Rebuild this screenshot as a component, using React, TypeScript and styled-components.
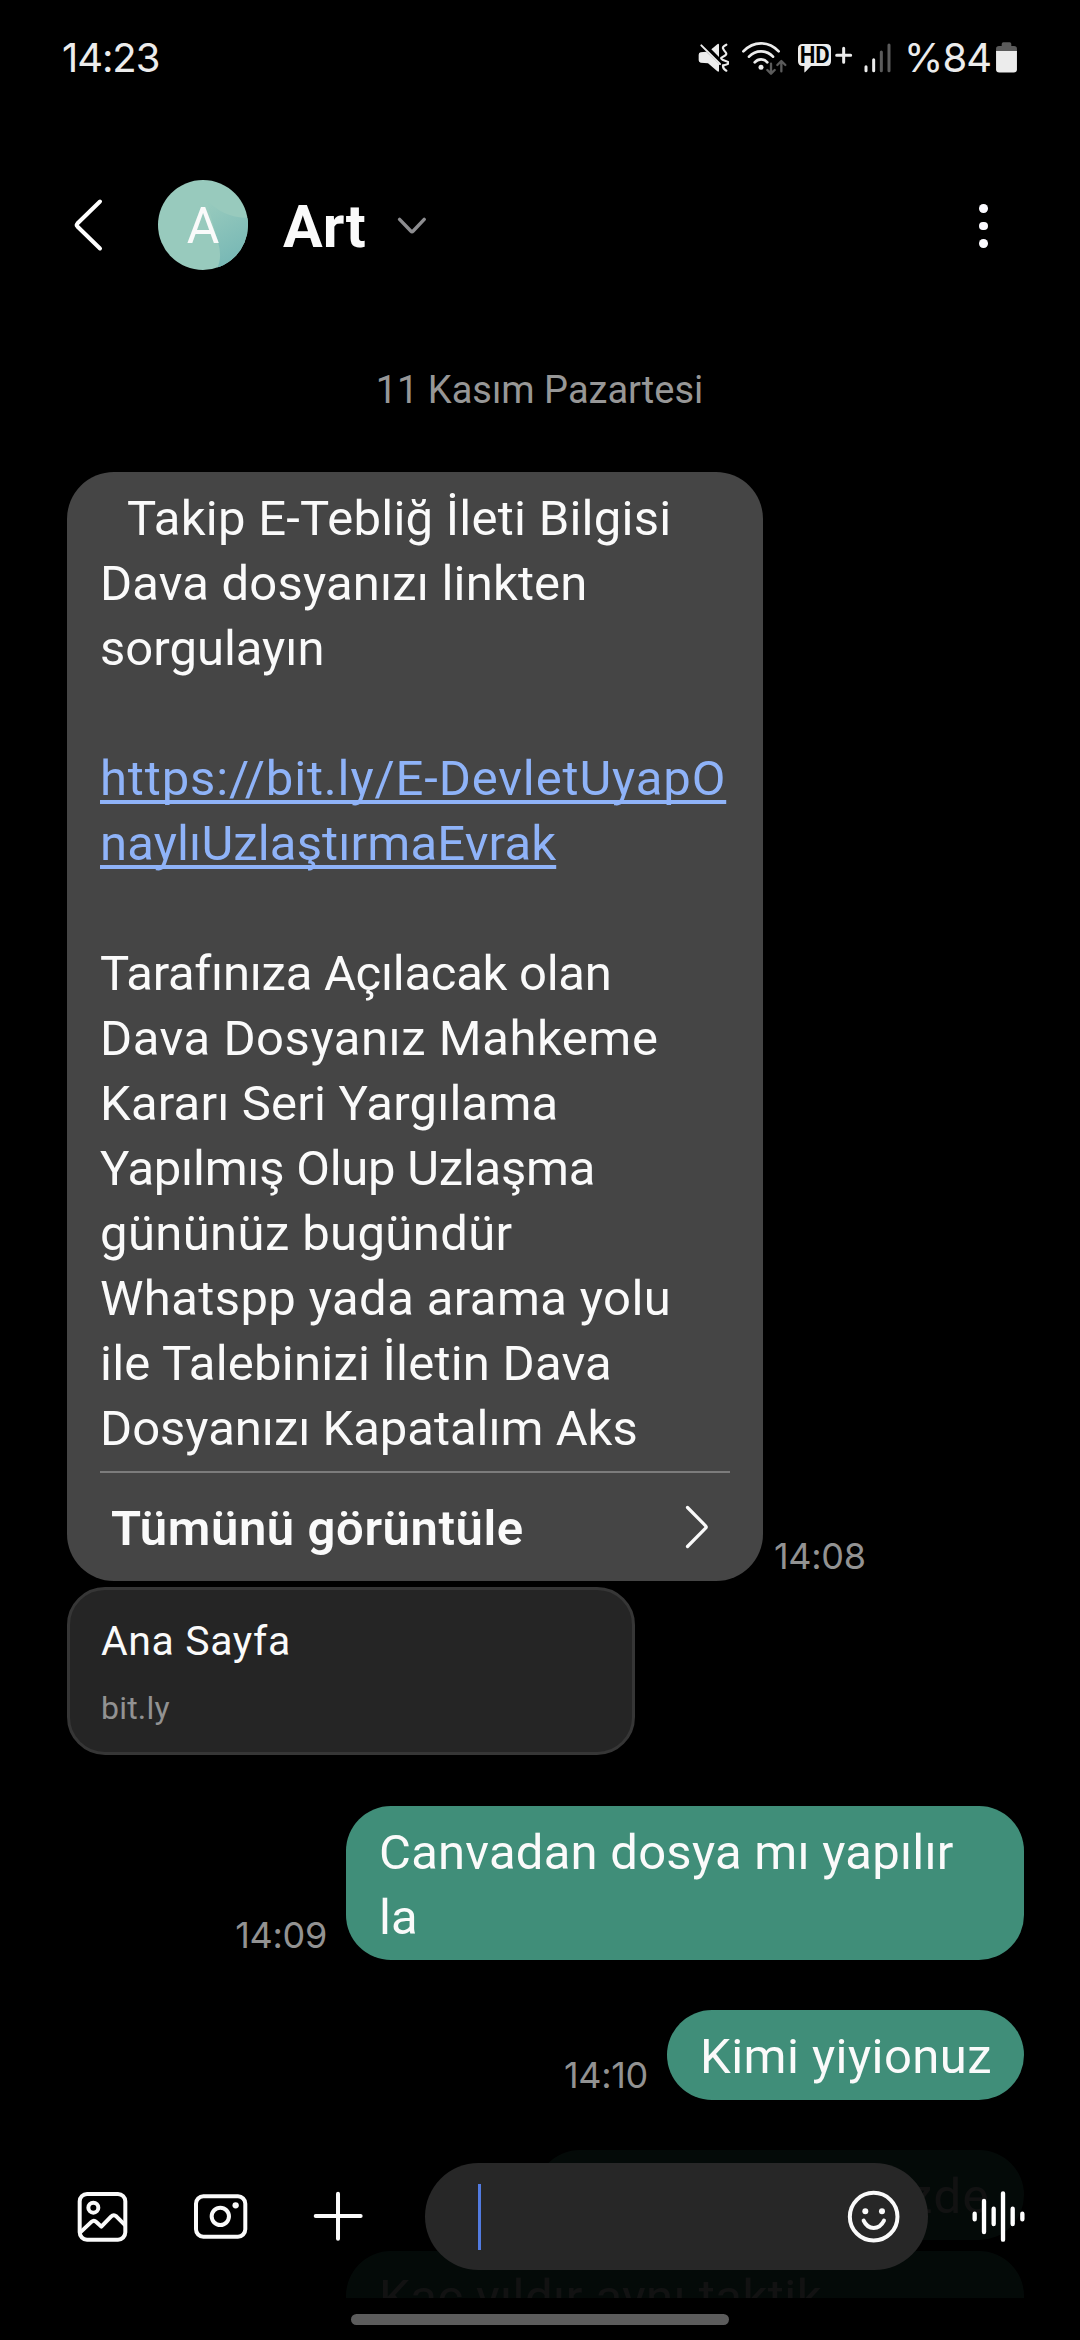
import React from 'react';
import styled, { createGlobalStyle } from 'styled-components';

const GlobalStyle = createGlobalStyle`
  *, *::before, *::after { box-sizing: border-box; }
  body {
    margin: 0;
    background: #000;
    color: #fafafa;
    font-family: Roboto, "Noto Sans", sans-serif;
  }
  svg { display: block; flex: none; }
`;

const Screen = styled.div`
  position: relative;
  display: flex;
  flex-direction: column;
  width: 1080px;
  height: 2340px;
  overflow: hidden;
  background: #000;
`;

/* ---------- status bar ---------- */

const StatusBar = styled.div`
  display: flex;
  align-items: center;
  justify-content: space-between;
  height: 115px;
  padding: 0 63px 0 62px;
  color: #ececec;
`;

const StatusText = styled.span<{ $track?: number }>`
  font-family: Inter, Roboto, sans-serif;
  font-size: 40px;
  line-height: 48px;
  white-space: nowrap;
  letter-spacing: ${(p) => p.$track ?? 0}px;
`;

const StatusIcons = styled.div`
  display: flex;
  align-items: center;
`;

const StatusSlot = styled.div<{ $gap: number; $width?: number }>`
  display: flex;
  width: ${(p) => (p.$width ? `${p.$width}px` : 'auto')};
  margin-left: ${(p) => p.$gap}px;
`;

/* ---------- header ---------- */

const Header = styled.header`
  display: flex;
  align-items: center;
  height: 220px;
  padding: 0 90px 0 73px;
`;

const Avatar = styled.div`
  position: relative;
  width: 90px;
  height: 90px;
  margin-left: 55px;
  border-radius: 50%;
  overflow: hidden;
`;

const AvatarLetter = styled.span`
  position: absolute;
  inset: 0;
  padding-top: 1px;
  text-align: center;
  font-size: 50px;
  line-height: 90px;
`;

const Title = styled.h1`
  margin: 0 0 0 35px;
  padding-top: 4px;
  font-size: 59px;
  line-height: 68px;
  font-weight: 700;
`;

const TitleChevron = styled.div`
  margin: 2px 0 0 31px;
`;

const HeaderMenu = styled.div`
  display: flex;
  flex-direction: column;
  gap: 9px;
  margin-left: auto;
  margin-top: 2px;
  padding-right: 2px;
`;

const MenuDot = styled.i`
  width: 8.6px;
  height: 8.8px;
  border-radius: 50%;
  background: #fbfaff;
`;

/* ---------- conversation ---------- */

const Conversation = styled.main`
  display: flex;
  flex-direction: column;
  flex: 1;
  min-height: 0;
  overflow: hidden;
  padding: 32px 56px 0 67px;
`;

const DateLabel = styled.div`
  margin-bottom: 59px;
  padding-right: 12px;
  text-align: center;
  color: #979797;
  font-size: 38px;
  line-height: 46px;
`;

const MessageRow = styled.div<{ $mine?: boolean; $top?: number }>`
  display: flex;
  flex: none;
  align-items: flex-end;
  justify-content: ${(p) => (p.$mine ? 'flex-end' : 'flex-start')};
  margin-top: ${(p) => p.$top ?? 0}px;
`;

const Time = styled.time<{ $mine?: boolean; $track?: number }>`
  margin: ${(p) => (p.$mine ? '0 19px 3px 0' : '0 0 3px 11px')};
  color: #929292;
  font-family: Inter, Roboto, sans-serif;
  font-size: 36px;
  line-height: 44px;
  letter-spacing: ${(p) => p.$track ?? -0.3}px;
`;

const IncomingBubble = styled.div`
  width: 696px;
  height: 1109px;
  padding: 14px 33px 0;
  border-radius: 47px;
  background: #454545;
`;

const OutgoingBubble = styled.div<{ $width: number; $alignEnd?: boolean }>`
  width: ${(p) => p.$width}px;
  min-height: 90px;
  padding: 14px 34px 10px 33px;
  border-radius: 45px;
  background: #408e79;
  text-align: ${(p) => (p.$alignEnd ? 'right' : 'left')};
`;

const Line = styled.div<{ $track?: number; $indent?: number }>`
  height: 65px;
  padding-left: ${(p) => p.$indent ?? 0}px;
  font-size: 49px;
  line-height: 65px;
  white-space: nowrap;
  letter-spacing: ${(p) => p.$track ?? 0}px;
`;

const LinkLine = styled(Line)`
  color: #8fb3f8;
  text-decoration: underline;
  text-decoration-thickness: 4px;
  text-underline-offset: 5px;
  text-decoration-skip-ink: none;
`;

const ShowAll = styled.div`
  display: flex;
  align-items: center;
  justify-content: space-between;
  height: 110px;
  margin-top: 10px;
  padding: 0 21px 0 11px;
  border-top: 2px solid #7c7c7c;
  font-size: 49px;
  font-weight: 600;
  letter-spacing: 0.6px;
`;

const ShowAllText = styled.span`
  padding-top: 3px;
  line-height: 65px;
`;

const PreviewCard = styled.div`
  flex: none;
  width: 568px;
  height: 168px;
  margin-top: 6px;
  padding: 27px 31px 0;
  border: 3px solid #363636;
  border-radius: 38px;
  background: #252525;
`;

const PreviewTitle = styled.div`
  font-size: 41px;
  line-height: 48px;
  letter-spacing: 0.6px;
`;

const PreviewHost = styled.div`
  margin-top: 24px;
  color: #929292;
  font-size: 32px;
  line-height: 38px;
  letter-spacing: 0.2px;
`;

/* ---------- composer ---------- */

const Composer = styled.div`
  position: absolute;
  left: 0;
  right: 0;
  bottom: 42px;
  display: flex;
  align-items: center;
  height: 163px;
  padding: 0 54px 0 76.7px;
  background: rgba(0, 0, 0, 0.93);
`;

const ComposerIcon = styled.div<{ $gap?: number }>`
  margin-left: ${(p) => p.$gap ?? 0}px;
`;

const InputPill = styled.div`
  display: flex;
  align-items: center;
  justify-content: space-between;
  width: 503px;
  height: 107px;
  margin-left: 62px;
  padding: 0 27px 0 53px;
  border-radius: 54px;
  background: #272727;
`;

const Caret = styled.i`
  width: 3px;
  height: 66px;
  background: #527be0;
`;

const NavBar = styled.footer`
  display: flex;
  justify-content: center;
  height: 42px;
  padding-top: 16px;
  background: #000;
`;

const HomeHandle = styled.div`
  width: 378px;
  height: 11px;
  border-radius: 6px;
  background: #5c5c5c;
`;

/* ---------- icons ---------- */

const MuteIcon = () => (
  <svg width="32" height="30.7" viewBox="20 36 96 92" fill="#ececec">
    <path d="M31 67L48 65L86 102V123Q85 127 81 124L53 100L31 98Q25 97 25 91V74Q25 68 31 67Z" />
    <path d="M63 58L82 42Q86 40 86 45V81Z" />
    <path d="M33 46L89 102" stroke="#ececec" strokeWidth="6" strokeLinecap="round" />
    <path
      d="M108 44Q96 50 98 55T106 67T98 80T106 93T98 106Q97 116 108 122"
      fill="none"
      stroke="#ececec"
      strokeWidth="6.5"
      strokeLinecap="round"
    />
  </svg>
);

const WifiIcon = () => (
  <svg width="46.7" height="34" viewBox="152 30 140 102" fill="none" strokeLinecap="round" strokeLinejoin="round">
    <g stroke="#ececec" strokeWidth="8">
      <path d="M159 61Q182 37 212 37T265 61" />
      <path d="M176 77Q191 61 212 61T248 77" />
      <path d="M193 94Q201 85 212 85T231 94" />
    </g>
    <circle cx="212" cy="109" r="7.5" fill="#ececec" />
    <g stroke="#5b5b5b" strokeWidth="7">
      <path d="M242 98V127M231 117L242 128L253 117" />
      <path d="M273 121V91M261 102L273 90L285 102" />
    </g>
  </svg>
);

const HdIcon = () => (
  <svg width="56" height="34" viewBox="320 34 168 102">
    <path
      d="M337 43H408Q422 43 422 57V95Q422 109 408 109H362L344 128Q342 129 342 126V109H337Q323 109 323 95V57Q323 43 337 43Z"
      fill="#ececec"
    />
    <text
      x="328"
      y="101"
      fill="#000"
      fontFamily="Roboto, sans-serif"
      fontWeight="700"
      fontSize="71"
      textLength="90"
      lengthAdjust="spacingAndGlyphs"
    >
      HD
    </text>
    <path d="M439 77H481M460 56V98" stroke="#ececec" strokeWidth="9" strokeLinecap="round" />
  </svg>
);

const SignalIcon = () => (
  <svg width="28" height="30" viewBox="522 38 84 90" strokeWidth="9" strokeLinecap="round">
    <path d="M528 109V121M551 88V121" stroke="#ececec" />
    <path d="M574 65V121M597 44V121" stroke="#5b5b5b" />
  </svg>
);

const BatteryIcon = () => (
  <svg width="21" height="30.5" viewBox="0 0 63 92">
    <path d="M17 6Q17 1 22 1H41Q46 1 46 6V12H54Q63 12 63 20V30H0V20Q0 12 9 12H17Z" fill="#5b5b5b" />
    <path d="M0 27H63V82Q63 92 53 92H10Q0 92 0 82Z" fill="#ececec" />
  </svg>
);

const BackIcon = () => (
  <svg width="30" height="56" viewBox="0 0 30 56" fill="none">
    <path d="M27 4.5L4.4 26.5Q3 28 4.4 29.5L27 51.5" stroke="#fff" strokeWidth="4" strokeLinecap="round" />
  </svg>
);

const AvatarShape = () => (
  <svg width="90" height="90" viewBox="0 0 90 90">
    <defs>
      <linearGradient id="petal" x1="50" y1="24" x2="82" y2="82" gradientUnits="userSpaceOnUse">
        <stop offset="0" stopColor="#97cabd" />
        <stop offset="1" stopColor="#76b7b5" />
      </linearGradient>
    </defs>
    <rect width="90" height="90" fill="#98cabd" />
    <path d="M48 18Q62 37 90 38V90H58Q65 79 60 62Q55 45 48 18Z" fill="url(#petal)" />
  </svg>
);

const DownIcon = () => (
  <svg width="30" height="18" viewBox="0 0 30 18" fill="none">
    <path
      d="M2.6 2.4L13.8 14Q15 15.2 16.2 14L27.2 2.4"
      stroke="#8d8d90"
      strokeWidth="3.4"
      strokeLinecap="round"
    />
  </svg>
);

const NextIcon = () => (
  <svg width="24" height="44" viewBox="0 0 24 44" fill="none">
    <path d="M2.5 2.5L20.6 20.8Q21.8 22 20.6 23.2L2.5 41.5" stroke="#fafafa" strokeWidth="3.2" strokeLinecap="round" />
  </svg>
);

const GalleryIcon = () => (
  <svg width="51" height="51.3" viewBox="20 34 153 154" fill="none" stroke="#fafafa" strokeWidth="12">
    <rect x="28" y="43" width="137" height="137" rx="22" />
    <circle cx="69" cy="84" r="15" />
    <path d="M29 159L64 126Q71 120 78 127L93 141L122 111Q130 103 138 110L165 137" strokeLinejoin="round" />
  </svg>
);

const CameraIcon = () => (
  <svg width="55.3" height="46.7" viewBox="370 42 166 140" fill="none" stroke="#fafafa" strokeWidth="12">
    <rect x="379" y="52" width="148" height="121" rx="22" />
    <circle cx="452" cy="112" r="26" />
    <circle cx="498" cy="79" r="9.5" fill="#fafafa" stroke="none" />
  </svg>
);

const PlusIcon = () => (
  <svg width="49.7" height="50.3" viewBox="729 36 149 151" stroke="#fafafa" strokeWidth="12" strokeLinecap="round">
    <path d="M737 111H872M804 44V179" />
  </svg>
);

const SmileIcon = () => (
  <svg width="53.3" height="53.3" viewBox="23 149 160 160" fill="none" stroke="#fafafa" strokeWidth="12">
    <circle cx="103" cy="229" r="71.5" />
    <circle cx="78" cy="213" r="9" fill="#fafafa" stroke="none" />
    <circle cx="128" cy="213" r="9" fill="#fafafa" stroke="none" />
    <path d="M73 241Q83 263 103 263T134 241" strokeLinecap="round" />
  </svg>
);

const VoiceIcon = () => (
  <svg width="52.7" height="52.7" viewBox="398 152 158 158" stroke="#fff" strokeWidth="13" strokeLinecap="round">
    <path d="M406 223V240M434 185V278M463 208V254M491 162V301M520 208V254M549 223V240" />
  </svg>
);

export default function App() {
  return (
    <>
      <GlobalStyle />
      <Screen>
        <StatusBar>
          <StatusText $track={-1.1}>14:23</StatusText>
          <StatusIcons>
            <MuteIcon />
            <StatusSlot $gap={12}>
              <WifiIcon />
            </StatusSlot>
            <StatusSlot $gap={9.3}>
              <HdIcon />
            </StatusSlot>
            <StatusSlot $gap={11.3}>
              <SignalIcon />
            </StatusSlot>
            <StatusSlot $gap={12} $width={90}>
              <StatusText $track={-0.9}>%84</StatusText>
            </StatusSlot>
            <StatusSlot $gap={2}>
              <BatteryIcon />
            </StatusSlot>
          </StatusIcons>
        </StatusBar>

        <Header>
          <BackIcon />
          <Avatar>
            <AvatarShape />
            <AvatarLetter>A</AvatarLetter>
          </Avatar>
          <Title>Art</Title>
          <TitleChevron>
            <DownIcon />
          </TitleChevron>
          <HeaderMenu>
            <MenuDot />
            <MenuDot />
            <MenuDot />
          </HeaderMenu>
        </Header>

        <Conversation>
          <DateLabel>11 Kasım Pazartesi</DateLabel>

          <MessageRow>
            <IncomingBubble>
              <Line $indent={27} $track={0.26}>Takip E-Tebliğ İleti Bilgisi</Line>
              <Line $track={0.18}>Dava dosyanızı linkten</Line>
              <Line>sorgulayın</Line>
              <Line />
              <LinkLine $track={0.87}>https://bit.ly/E-DevletUyapO</LinkLine>
              <LinkLine $track={0.16}>naylıUzlaştırmaEvrak</LinkLine>
              <Line />
              <Line $track={-0.28}>Tarafınıza Açılacak olan</Line>
              <Line $track={0.55}>Dava Dosyanız Mahkeme</Line>
              <Line $track={0.18}>Kararı Seri Yargılama</Line>
              <Line $track={-0.25}>Yapılmış Olup Uzlaşma</Line>
              <Line $track={0.38}>gününüz bugündür</Line>
              <Line $track={0.4}>Whatspp yada arama yolu</Line>
              <Line $track={0.24}>ile Talebinizi İletin Dava</Line>
              <Line $track={-0.02}>Dosyanızı Kapatalım Aks</Line>
              <ShowAll>
                <ShowAllText>Tümünü görüntüle</ShowAllText>
                <NextIcon />
              </ShowAll>
            </IncomingBubble>
            <Time>14:08</Time>
          </MessageRow>

          <PreviewCard>
            <PreviewTitle>Ana Sayfa</PreviewTitle>
            <PreviewHost>bit.ly</PreviewHost>
          </PreviewCard>

          <MessageRow $mine $top={51}>
            <Time $mine>14:09</Time>
            <OutgoingBubble $width={678}>
              <Line $track={0.24}>Canvadan dosya mı yapılır</Line>
              <Line>la</Line>
            </OutgoingBubble>
          </MessageRow>

          <MessageRow $mine $top={50}>
            <Time $mine>14:10</Time>
            <OutgoingBubble $width={357}>
              <Line $track={0.45}>Kimi yiyionuz</Line>
            </OutgoingBubble>
          </MessageRow>

          <MessageRow $mine $top={50}>
            <OutgoingBubble $width={489} $alignEnd>
              <Line $track={1.5}>zde</Line>
            </OutgoingBubble>
          </MessageRow>

          <MessageRow $mine $top={11}>
            <OutgoingBubble $width={678}>
              <Line $track={0.5}>Kaç yıldır aynı taktik</Line>
            </OutgoingBubble>
          </MessageRow>
        </Conversation>

        <Composer>
          <GalleryIcon />
          <ComposerIcon $gap={65.6}>
            <CameraIcon />
          </ComposerIcon>
          <ComposerIcon $gap={64.4}>
            <PlusIcon />
          </ComposerIcon>
          <InputPill>
            <Caret />
            <SmileIcon />
          </InputPill>
          <ComposerIcon $gap={44.7}>
            <VoiceIcon />
          </ComposerIcon>
        </Composer>

        <NavBar>
          <HomeHandle />
        </NavBar>
      </Screen>
    </>
  );
}
